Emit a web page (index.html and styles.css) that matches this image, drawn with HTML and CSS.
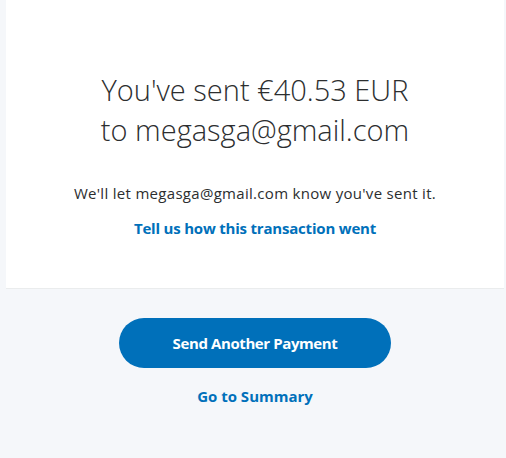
FILE: index.html
```html
<!DOCTYPE html>
<html lang="en">
<head>
  <meta charset="UTF-8" />
  <meta name="viewport" content="width=device-width,initial-scale=1.0" />
  <title>Payment sent</title>
  <link rel="stylesheet" href="styles.css">
</head>
<body>
  <div class="page">
    <div class="card">
      <h1 class="sent-title">You've sent €40.53 EUR<br>to megasga@gmail.com</h1>
      <p class="sent-note">We'll let megasga@gmail.com know you've sent it.</p>
      <a class="link link-feedback" href="#">Tell us how this transaction went</a>
    </div>
    <!-- actions below the card -->
    <div class="actions">
      <button class="btn-primary" type="button">Send Another Payment</button>
      <a class="link" href="#">Go to Summary</a>
    </div>
  </div>
</body>
</html>
```

FILE: styles.css
```css
html,body{margin:0;width:100%;height:100%;overflow:hidden;background:#f5f7fa}
body {
  font-family: "Open Sans", "Noto Sans", sans-serif;
  color: #2c2e2f;
}
.page {
  display: flex;
  flex-direction: column;
  margin: 0 2px 0 6px;
}

/* White confirmation card */
.card {
  background: #fff;
  border-bottom: 1px solid #eaeced;
  padding: 70px 16px 50px;
  display: flex;
  flex-direction: column;
  align-items: center;
  text-align: center;
}
.sent-title {
  margin: 0;
  font-size: 29px;
  font-weight: 300;
  line-height: 40px;
  color: #2c2e2f;
}
.sent-note {
  margin: 33px 0 0;
  font-size: 15px;
  letter-spacing: 0.3px;
  line-height: 20px;
}
.link {
  display: inline-block;
  margin-top: 15px;
  color: #0070ba;
  font-size: 15px;
  font-weight: 700;
  line-height: 20px;
  text-decoration: none;
}
.link-feedback {
  letter-spacing: -0.2px;
}

.actions {
  display: flex;
  flex-direction: column;
  align-items: center;
  padding-top: 29px;
}
.btn-primary {
  width: 272px;
  height: 50px;
  border: none;
  border-radius: 25px;
  background: #0070ba;
  color: #fff;
  font-family: inherit;
  font-size: 15px;
  font-weight: 700;
  letter-spacing: -0.4px;
  cursor: pointer;
}
.actions .link {
  margin-top: 18px;
}
```
